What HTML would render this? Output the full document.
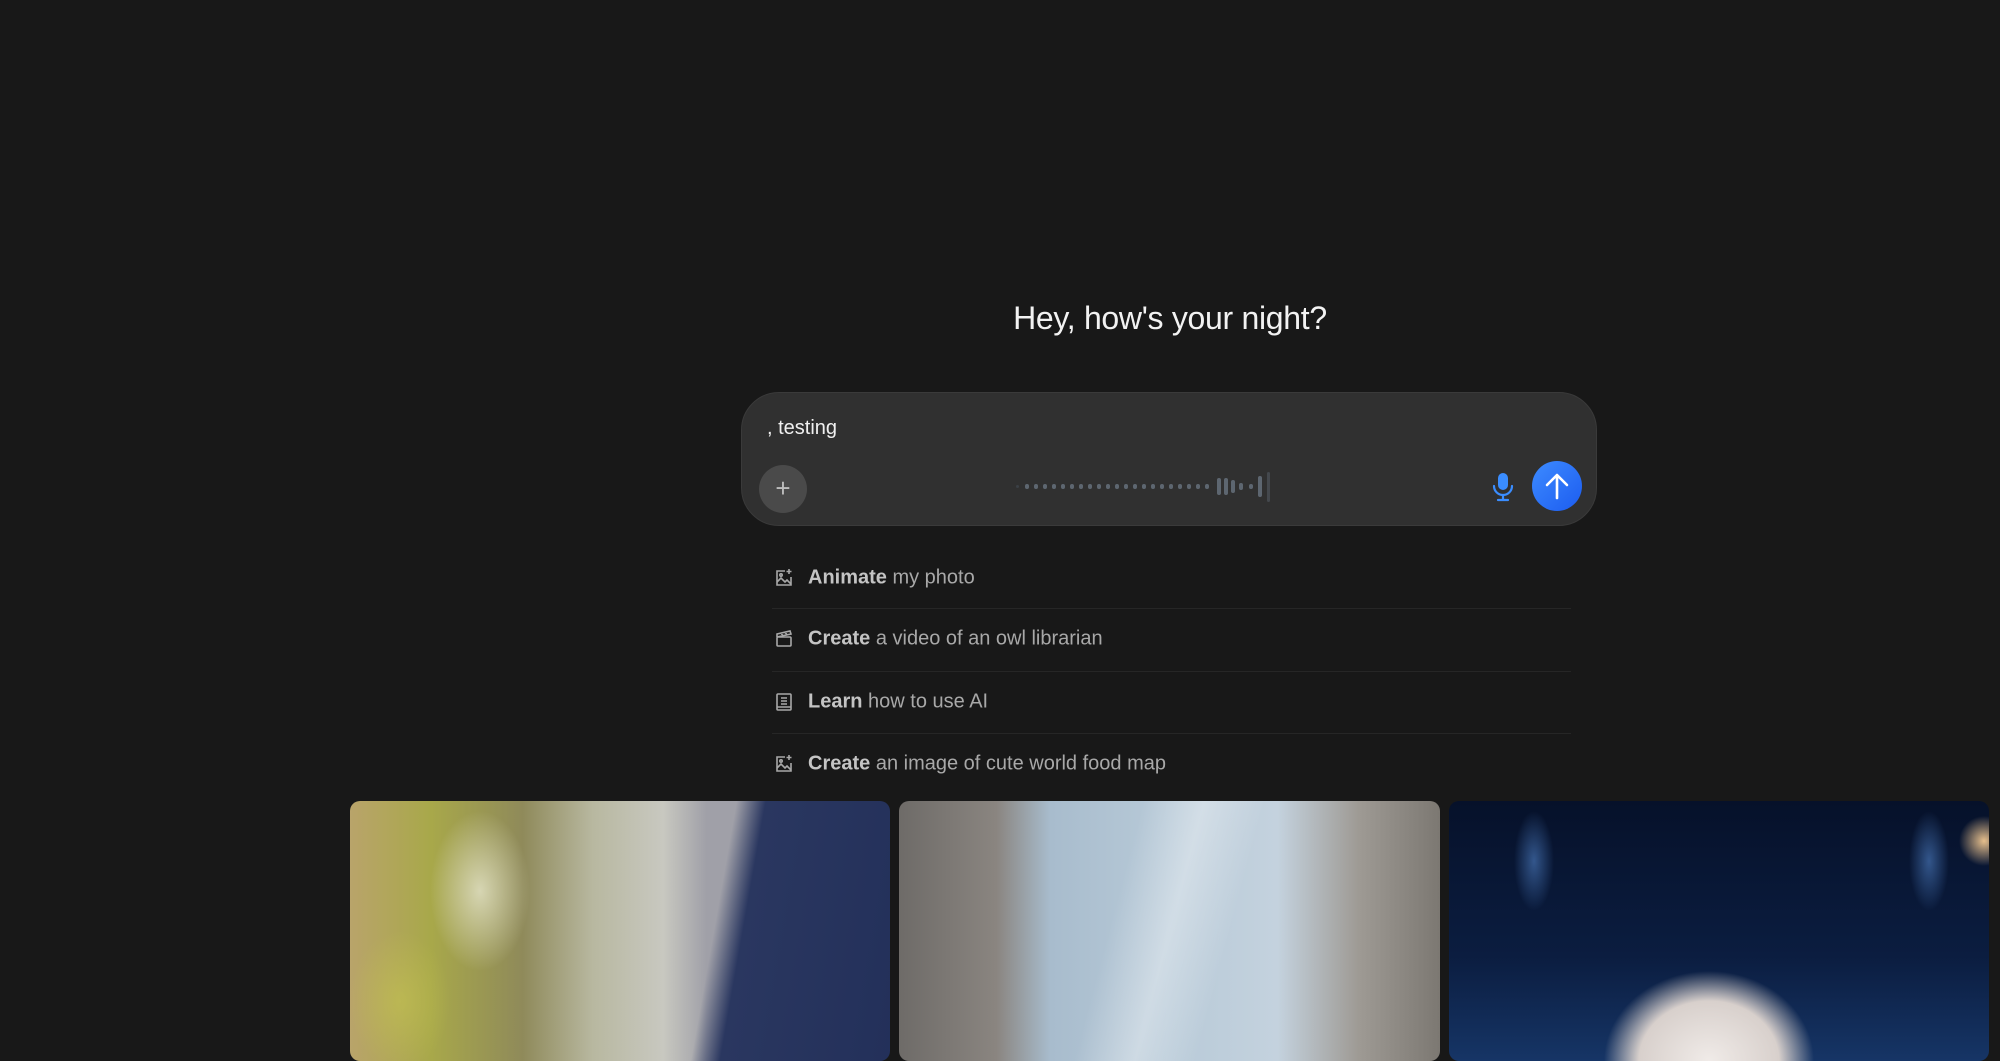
<!DOCTYPE html>
<html><head><meta charset="utf-8"><style>
*{margin:0;padding:0;box-sizing:border-box}
body{width:2000px;height:1045px;background:#181818;overflow:hidden;position:relative;font-family:"Liberation Sans",sans-serif;color:#e8e8e8}
h1{position:absolute;left:0;width:2340px;text-align:center;top:300px;font-weight:400;font-size:32px;color:#f2f2f2;letter-spacing:-0.3px}
.box{position:absolute;left:741px;top:392px;width:856px;height:134px;background:#303030;border-radius:38px;border:1px solid #3a3a3a}
.txt{position:absolute;left:767px;top:417px;font-size:20px;color:#f0f0f0}
.plus{position:absolute;left:759px;top:465px;width:48px;height:48px;border-radius:50%;background:#4a4a4a;color:#bdbdbd;font-size:26px;line-height:46px;text-align:center;font-weight:300}
.send{position:absolute;left:1532px;top:461px;width:50px;height:50px;border-radius:50%;background:linear-gradient(135deg,#3d8bff,#1c5cf0)}
.row{position:absolute;left:772px;width:799px;height:62px;font-size:20px;color:#a8a8a8}
.row span.t{position:absolute;left:36px;top:50%;transform:translateY(-50%)}
.row b{color:#c4c4c4;font-weight:700}
.row svg{position:absolute;left:2px;top:50%;transform:translateY(-50%)}
.sep{position:absolute;left:772px;width:799px;height:1px;background:#262626}
.card{position:absolute;top:801px;height:260px;border-radius:10px;overflow:hidden}
</style></head><body>
<h1>Hey, how's your night?</h1>
<div class="box"></div>
<div class="txt">, testing</div>
<div class="plus">+</div>
<svg style="position:absolute;left:1010px;top:470px" width="270" height="34">
<g fill="#5d6670">
<rect x="6" y="15" width="3" height="3" rx="1.5" fill="#3b4046"/>
<rect x="15" y="14" width="4" height="5" rx="2"/><rect x="24" y="14" width="4" height="5" rx="2"/><rect x="33" y="14" width="4" height="5" rx="2"/><rect x="42" y="14" width="4" height="5" rx="2"/><rect x="51" y="14" width="4" height="5" rx="2"/><rect x="60" y="14" width="4" height="5" rx="2"/><rect x="69" y="14" width="4" height="5" rx="2"/><rect x="78" y="14" width="4" height="5" rx="2"/><rect x="87" y="14" width="4" height="5" rx="2"/><rect x="96" y="14" width="4" height="5" rx="2"/><rect x="105" y="14" width="4" height="5" rx="2"/><rect x="114" y="14" width="4" height="5" rx="2"/><rect x="123" y="14" width="4" height="5" rx="2"/><rect x="132" y="14" width="4" height="5" rx="2"/><rect x="141" y="14" width="4" height="5" rx="2"/><rect x="150" y="14" width="4" height="5" rx="2"/><rect x="159" y="14" width="4" height="5" rx="2"/><rect x="168" y="14" width="4" height="5" rx="2"/><rect x="177" y="14" width="4" height="5" rx="2"/><rect x="186" y="14" width="4" height="5" rx="2"/><rect x="195" y="14" width="4" height="5" rx="2"/>
<rect x="207" y="8" width="4" height="17" rx="2"/><rect x="214" y="8" width="4" height="17" rx="2"/><rect x="221" y="10" width="4" height="13" rx="2"/><rect x="229" y="13" width="4" height="7" rx="2"/><rect x="239" y="14" width="4" height="5" rx="2"/><rect x="248" y="6" width="4" height="21" rx="2"/><rect x="257" y="2" width="3" height="30" rx="1.5" fill="#44484d"/>
</g></svg>
<svg style="position:absolute;left:1491px;top:472px" width="24" height="30" viewBox="0 0 24 30">
<rect x="7" y="1" width="10" height="17" rx="5" fill="#3a8dff"/>
<path d="M3 14a9 9 0 0 0 18 0M12 23v5M7 28h10" stroke="#3a8dff" stroke-width="2.2" fill="none" stroke-linecap="round"/></svg>
<div class="send"><svg width="50" height="50" viewBox="0 0 50 50"><path d="M25 37V14M15 24l10-10 10 10" stroke="#fff" stroke-width="2.6" fill="none" stroke-linecap="round" stroke-linejoin="round"/></svg></div>

<div class="row" style="top:547px"><svg width="20" height="20" viewBox="0 0 20 20" fill="none" stroke="#a8a8a8" stroke-width="1.6"><path d="M11 3H3v14h14V9"/><path d="M3 14l4-4 4 4 2-2 4 4"/><circle cx="7" cy="7" r="1.2"/><path d="M15 1v5M12.5 3.5h5"/></svg><span class="t"><b>Animate</b> my photo</span></div>
<div class="sep" style="top:608px"></div>
<div class="row" style="top:608px"><svg width="20" height="20" viewBox="0 0 20 20" fill="none" stroke="#a8a8a8" stroke-width="1.6"><rect x="3" y="8" width="14" height="9" rx="1"/><path d="M3 8V5l13-3 1 3-14 3M7 4l2 3M11 3l2 3"/></svg><span class="t"><b>Create</b> a video of an owl librarian</span></div>
<div class="sep" style="top:671px"></div>
<div class="row" style="top:671px"><svg width="20" height="20" viewBox="0 0 20 20" fill="none" stroke="#a8a8a8" stroke-width="1.6"><rect x="3" y="2" width="14" height="16" rx="1"/><path d="M7 6h6M7 9h6M7 12h6M3 15h14"/></svg><span class="t"><b>Learn</b> how to use AI</span></div>
<div class="sep" style="top:733px"></div>
<div class="row" style="top:733px"><svg width="20" height="20" viewBox="0 0 20 20" fill="none" stroke="#a8a8a8" stroke-width="1.6"><path d="M11 3H3v14h14V9"/><path d="M3 14l4-4 4 4 2-2 4 4"/><circle cx="7" cy="7" r="1.2"/><path d="M15 1v5M12.5 3.5h5"/></svg><span class="t"><b>Create</b> an image of cute world food map</span></div>

<div class="card" style="left:350px;width:540px;background:
radial-gradient(ellipse 50px 80px at 130px 90px,rgba(240,240,220,.7),transparent),
radial-gradient(ellipse 50px 70px at 50px 200px,rgba(200,200,80,.5),transparent),
linear-gradient(100deg,transparent 0 66%,#2a3760 71%,#23305a 100%),
linear-gradient(90deg,#b9a46a 0,#a8a84a 15%,#8f8a5a 32%,#b8b8a0 45%,#c8c8c0 58%,#a0a0a8 66%)"></div>
<div class="card" style="left:899px;width:541px;background:
linear-gradient(105deg,transparent 40%,rgba(255,255,255,.35) 50%,transparent 60%),
linear-gradient(90deg,#6e6b68 0,#8a8580 18%,#a8bccd 28%,#b8cad8 50%,#c4d2de 70%,#9e9a94 85%,#7c7872 100%)"></div>
<div class="card" style="left:1449px;width:540px;background:
radial-gradient(ellipse 140px 120px at 260px 260px,#f0ebe8,#d8d0cc 50%,transparent 75%),
radial-gradient(ellipse 20px 50px at 85px 60px,rgba(80,130,200,.6),transparent),
radial-gradient(ellipse 20px 50px at 480px 60px,rgba(80,130,200,.6),transparent),
radial-gradient(circle 25px at 535px 40px,rgba(255,210,150,.9),transparent),
linear-gradient(180deg,#06112a,#0b1d40 60%,#163566)"></div>
</body></html>
